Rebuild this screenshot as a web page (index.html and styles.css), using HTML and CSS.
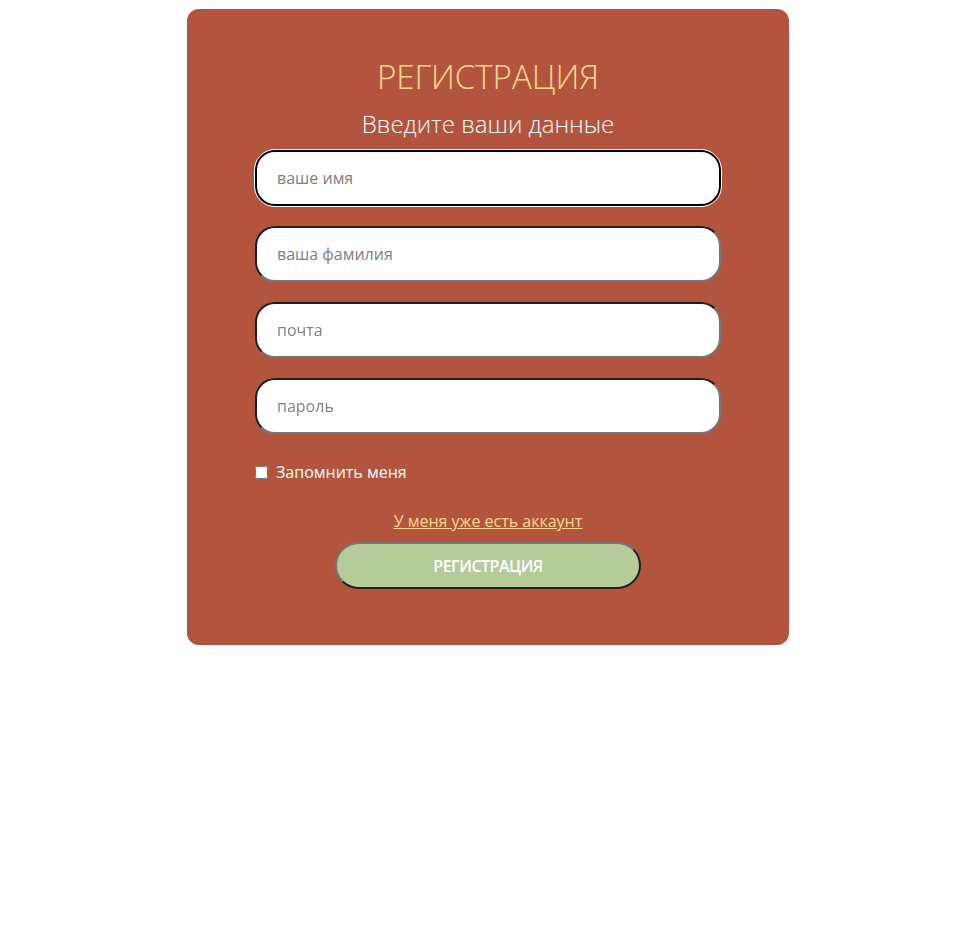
FILE: index.html
```html
<!DOCTYPE html>
<html lang="ru">
<head>
<meta charset="utf-8">
<title>Регистрация</title>
<link rel="stylesheet" href="styles.css">
</head>
<body>
<main class="card">
  <h1 class="title">РЕГИСТРАЦИЯ</h1>
  <p class="subtitle">Введите ваши данные</p>
  <form class="form">
    <input class="field field-focused" type="text" placeholder="ваше имя" autofocus>
    <input class="field" type="text" placeholder="ваша фамилия">
    <input class="field" type="email" placeholder="почта">
    <input class="field" type="password" placeholder="пароль">
    <label class="remember"><input type="checkbox" class="check"><span>Запомнить меня</span></label>
    <a class="login-link" href="#">У меня уже есть аккаунт</a>
    <button class="submit" type="button">РЕГИСТРАЦИЯ</button>
  </form>
</main>
</body>
</html>
```
FILE: styles.css
```css
html, body {
  margin: 0;
  padding: 0;
  background: #ffffff;
}

body {
  font-family: "Open Sans", "Noto Sans", sans-serif;
  padding-top: 9px;
}

.card {
  box-sizing: border-box;
  width: 602px;
  height: 636px;
  margin-left: 187px;
  background: #b3553e;
  border-radius: 12px;
  padding: 48px 68px 0;
  text-align: center;
}

.title {
  margin: 0;
  font-size: 33px;
  font-weight: 300;
  line-height: 40px;
  color: #ffd98c;
}

.subtitle {
  margin: 11px 0 0;
  font-size: 24px;
  font-weight: 300;
  line-height: 32px;
  color: #ffffff;
}

.form {
  display: flex;
  flex-direction: column;
  align-items: center;
  margin-top: 10px;
}

.field {
  box-sizing: border-box;
  width: 466px;
  height: 56px;
  margin: 0 0 20px;
  padding: 0 20px;
  border: 2px solid;
  border-color: #1f1f1f #767676 #767676 #1f1f1f;
  border-radius: 20px;
  background: #ffffff;
  font-family: "Open Sans", "Noto Sans", sans-serif;
  font-size: 16px;
  color: #333;
  outline: none;
}

.field::placeholder {
  color: #808080;
}

.field-focused,
.field:focus {
  border-color: #000;
  outline: 1px solid #ffffff;
  outline-offset: 0;
}

.remember {
  align-self: flex-start;
  display: flex;
  align-items: center;
  gap: 8px;
  margin-top: 7px;
  font-size: 16px;
  color: #ffffff;
  line-height: 22px;
}

.check {
  margin: 0;
  width: 13px;
  height: 13px;
}

.login-link {
  margin-top: 27px;
  font-size: 16px;
  line-height: 22px;
  color: #ffd98c;
  text-decoration: underline;
}

.submit {
  box-sizing: border-box;
  width: 306px;
  height: 47px;
  margin-top: 10px;
  border: 2px solid;
  border-color: #767676 #1f1f1f #1f1f1f #767676;
  border-radius: 24px;
  background: #b5cb99;
  color: #ffffff;
  font-family: "Open Sans", "Noto Sans", sans-serif;
  font-size: 16px;
  font-weight: 600;
  letter-spacing: -0.5px;
  cursor: pointer;
}
```
